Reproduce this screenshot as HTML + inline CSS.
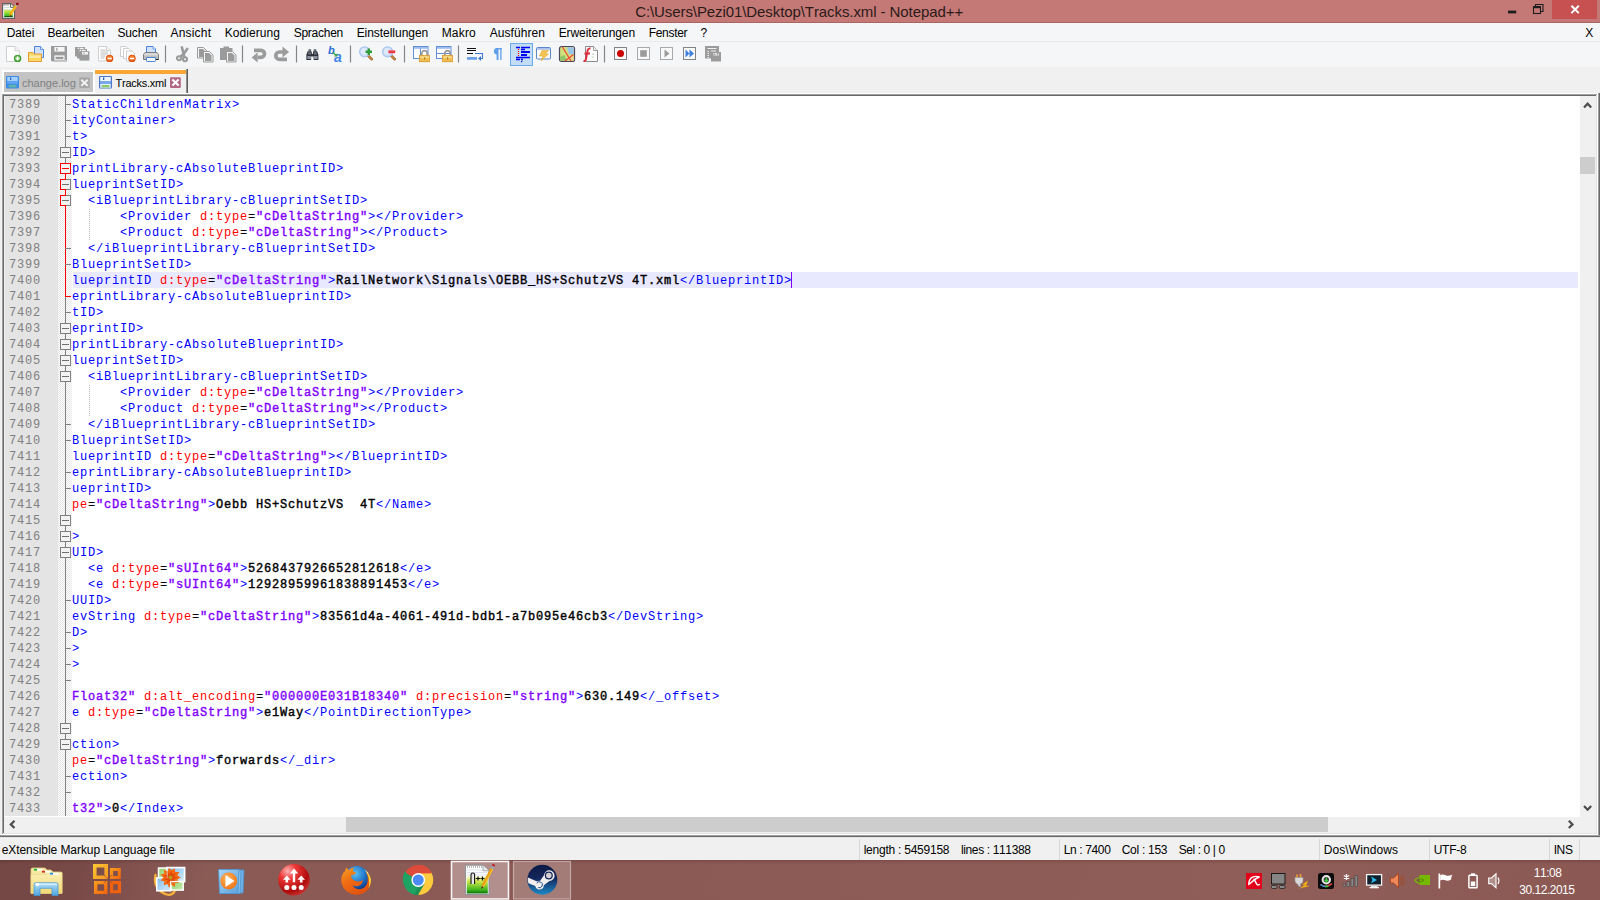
<!DOCTYPE html>
<html lang="de">
<head>
<meta charset="utf-8">
<title>C:\Users\Pezi01\Desktop\Tracks.xml - Notepad++</title>
<style>
*{box-sizing:border-box;margin:0;padding:0}
html,body{width:1600px;height:900px;overflow:hidden;background:#f0f0f0}
body{position:relative;font-kerning:none;font-family:"Liberation Sans",sans-serif;font-size:12px;color:#000}
i,b{font-style:normal;font-weight:normal;display:block;position:absolute}
.abs{position:absolute}
/* title bar */
#title{position:absolute;left:0;top:0;width:1600px;height:23px;background:#c47976;border-bottom:1px solid #ab6561}
#title .cap{position:absolute;left:0;top:0;width:1600px;height:22px}#title .cap span{position:absolute;white-space:pre;line-height:23px;height:22px;color:#2c1a19}
#closebtn{position:absolute;left:1552px;top:0;width:45px;height:19px;background:#c75050}
/* menu */
#menu{position:absolute;left:0;top:23px;width:1600px;height:19px;background:#f5f6f7;border-bottom:1px solid #e9eaeb}
#menu span{position:absolute;top:0;height:19px;line-height:20px;font-size:12px;white-space:nowrap;color:#000}
/* toolbar */
#tb{position:absolute;left:0;top:42px;width:1600px;height:25px;background:#f5f6f7}

#tb .sep{position:absolute;top:3px;width:1px;height:19px;background:#8d8d8d}
/* tabs */
#tabs{position:absolute;left:0;top:67px;width:1600px;height:26px;background:#f0f0f0}
.tab{position:absolute;white-space:nowrap;font-size:11px}
#tab1{left:3.500px;top:4.500px;width:89.500px;height:20.500px;background:#c3c3c3;color:#808080}
#tab2{left:95px;top:3px;width:91px;height:23px;background:#f0f0f0;border-top:4px solid #faa634;color:#000}
.tab span{position:absolute}
/* editor */
#ed{position:absolute;left:0;top:93px;width:1600px;height:744px}#ed i{position:absolute}
#edtop{position:absolute;left:0;top:93px;width:1600px;height:1px;background:#fff}
#gut{position:absolute;left:4px;top:96px;width:54px;height:720px;background:#e4e4e4;overflow:hidden}
#foldm{position:absolute;left:58px;top:96px;width:14px;height:720px;background:repeating-conic-gradient(#fff 0 25%,#e6e6e6 0 50%) 0 0/2px 2px;overflow:hidden}
#code{position:absolute;left:72px;top:96px;width:1508px;height:720px;background:#fff;overflow:hidden;
 font-family:"Liberation Mono",monospace;font-size:12px;letter-spacing:.7988px}
.no{position:absolute;left:5px;width:40px;height:16px;line-height:19px;font-family:"Liberation Mono",monospace;font-size:12px;letter-spacing:.7988px;color:#808080;white-space:pre}
.ln{position:absolute;left:0;width:1506px;height:16px;line-height:19px;white-space:pre}
.ln.cur{background:linear-gradient(90deg,transparent 0,transparent 1px,#e8e8ff 1px)}
.ln span{display:inline}
.t{color:#0000ff}.a{color:#ff0000}.s{color:#8000ff;-webkit-text-stroke:.4px #8000ff}.x{color:#000;-webkit-text-stroke:.4px #000}.e{color:#000}
.caret{display:inline-block;position:relative;width:1px;height:15px;background:#8000ff;vertical-align:top;margin-left:-1px;height:16px}
#foldline{position:absolute;left:65px;top:96px;width:1px;height:720px;background:#808080}
.tk{left:65px;width:6px;height:1px;background:#808080}
.tk.red{background:#ff0000;left:65px}
.bx{left:60px;width:11px;height:11px;border:1px solid #808080;background:#f3f3f3}
.bx b{left:1px;top:4px;width:7px;height:1px;background:#707070}
.bx.r{border-color:#ff0000}.bx.r b{background:#ff0000}
.bx.h::before{content:"";position:absolute;left:-1px;top:-1px;width:5px;height:9px;border:1px solid #ff0000;border-right:none}
.ig{position:absolute;left:17px;width:1px;height:32px;background:repeating-linear-gradient(180deg,#b4b4b4 0,#b4b4b4 1px,transparent 1px,transparent 2px)}
/* scrollbars */
#vs{position:absolute;left:1580px;top:96px;width:16px;height:721px;background:#f0f0f0}
#hs{position:absolute;left:4px;top:817px;width:1576px;height:16px;background:#f0f0f0}
#corner{position:absolute;left:1580px;top:817px;width:16px;height:16px;background:#f0f0f0}
.thumb{position:absolute;background:#cdcdcd}
/* status */
#status{position:absolute;left:0;top:837px;width:1600px;height:23px;background:#f0f0f0;font-size:12px;border-top:1px solid #e4e4e4}
#status span{position:absolute;top:0;height:23px;line-height:25px;white-space:pre}
#status i{top:1px;width:1px;height:21px;background:#d7d7d7}
/* taskbar */
#task{position:absolute;left:0;top:860px;width:1600px;height:40px;overflow:hidden;background:linear-gradient(180deg,rgba(60,25,25,.22) 0,rgba(60,25,25,0) 10%),linear-gradient(100deg,#744744 0,#784a47 5%,#835350 9%,#8a5a55 13%,#8b5a55 40%,#8e5c57 62%,#905e59 80%,#8b5853 100%)}
.clk span{position:absolute;color:#fff;white-space:pre;line-height:14px}
</style>
</head>
<body>
<div id="title">
  <div class="cap"><span style="left:635.15px;top:0px;font-size:15px;letter-spacing:-0.084px;">C:\Users\Pezi01\Desktop\Tracks.xml - Notepad++</span></div>
  <div id="closebtn"></div>
  <svg class="abs" style="left:0;top:0" width="1600" height="23" viewBox="0 0 1600 23">
    <g transform="translate(2,3)"><g id="nppicon">
      <path d="M0.600 0.600h8.200l3.700 3.600v11.200h-11.900z" fill="#fff" stroke="#5c6466" stroke-width="1.200"/>
      <path d="M8.600 0.800v3.600h3.700" fill="#fff" stroke="#5c6466" stroke-width="1"/>
      <path d="M2 1.200v1.500M4 1.200v1.500M6 1.200v1.500" stroke="#8a6a6a" stroke-width=".9"/>
      <path d="M2.200 4.600h5.500" stroke="#b9cbd6" stroke-width=".8"/>
      <defs><linearGradient id="ng" x1="0" y1="0" x2="0" y2="1"><stop offset="0" stop-color="#dfe94a"/><stop offset=".35" stop-color="#b4e23c"/><stop offset=".8" stop-color="#3fc12c"/><stop offset=".88" stop-color="#0a6a0a"/><stop offset="1" stop-color="#054c05"/></linearGradient></defs>
      <rect x="2.200" y="6.200" width="8.600" height="7.900" fill="url(#ng)"/>
      <rect x="2.200" y="6.200" width="8.600" height="1" fill="#d6e4f4"/>
      <path d="M14.300 1.800l-6.400 10.900" stroke="#f5a800" stroke-width="2.300"/>
      <path d="M14.800 2.100l-6.400 10.900" stroke="#ffcf3a" stroke-width=".8"/>
      <path d="M8.500 11.600l-1.100 2.300 2.300-1.300z" fill="#6b4a2a"/>
      <path d="M14.900 0.800l-1.200 2" stroke="#8aa4d0" stroke-width="2.200"/>
      <rect x="14.200" y="-.2" width="2.300" height="2.200" fill="#8a0000"/>
    </g></g>
    <rect x="1508" y="10.600" width="8.200" height="2.800" fill="#1e1e1e"/>
    <path d="M1535.500 6.500v-2h7.500v7h-2" fill="none" stroke="#1e1e1e" stroke-width="1.100"/>
    <rect x="1533.500" y="7" width="7" height="6.500" fill="none" stroke="#1e1e1e" stroke-width="1.100"/>
    <rect x="1533" y="6" width="8" height="2.200" fill="#1e1e1e"/>
    <path d="M1571.400 5.700l7.400 7.400M1578.800 5.700l-7.400 7.400" stroke="#fff" stroke-width="2" fill="none"/>
  </svg>
</div>
<div id="menu">
  <span style="left:6.66px;top:0px;font-size:12px;letter-spacing:-0.078px;">Datei</span>
  <span style="left:47.41px;top:0px;font-size:12px;letter-spacing:-0.114px;">Bearbeiten</span>
  <span style="left:117.41px;top:0px;font-size:12px;letter-spacing:-0.133px;">Suchen</span>
  <span style="left:170.41px;top:0px;font-size:12px;letter-spacing:0.217px;">Ansicht</span>
  <span style="left:224.66px;top:0px;font-size:12px;letter-spacing:0.080px;">Kodierung</span>
  <span style="left:293.66px;top:0px;font-size:12px;letter-spacing:-0.247px;">Sprachen</span>
  <span style="left:356.66px;top:0px;font-size:12px;letter-spacing:-0.043px;">Einstellungen</span>
  <span style="left:441.66px;top:0px;font-size:12px;letter-spacing:0.192px;">Makro</span>
  <span style="left:489.66px;top:0px;font-size:12px;letter-spacing:0.073px;">Ausführen</span>
  <span style="left:558.66px;top:0px;font-size:12px;letter-spacing:-0.074px;">Erweiterungen</span>
  <span style="left:648.66px;top:0px;font-size:12px;letter-spacing:-0.301px;">Fenster</span>
  <span style="left:700.41px;top:0px;font-size:12px;letter-spacing:-1.090px;">?</span>
  <span style="left:1585.16px;top:0px;font-size:12px;letter-spacing:0.840px;">X</span>
</div>
<div id="tb">
<svg width="760" height="25" viewBox="0 0 760 25" style="position:absolute;left:0;top:0"><rect x="164.9" y="3.500" width="1.200" height="17" fill="#858585"/><rect x="241.9" y="3.500" width="1.200" height="17" fill="#858585"/><rect x="295.9" y="3.500" width="1.200" height="17" fill="#858585"/><rect x="349.9" y="3.500" width="1.200" height="17" fill="#858585"/><rect x="403.9" y="3.500" width="1.200" height="17" fill="#858585"/><rect x="457.9" y="3.500" width="1.200" height="17" fill="#858585"/><rect x="603.9" y="3.500" width="1.200" height="17" fill="#858585"/><g transform="translate(6,4)"><path d="M0.5 0.5h8.5l4.5 4.5v10.5h-13z" fill="#fff" stroke="#cfcfcf"/><path d="M9 0.5v4.5h4.5" fill="#f1f1f1" stroke="#d4d4d4"/><circle cx="11.6" cy="12.4" r="3.7" fill="#3f9a32"/><circle cx="11.6" cy="12" r="2.6" fill="#62b84c"/><path d="M9.6 12.4h4M11.6 10.4v4" stroke="#fff" stroke-width="1.5"/></g>
<g transform="translate(28,4)"><path d="M6.5 0.5h6l3 3v8h-9z" fill="#cfe0fb" stroke="#4b83d8"/><path d="M12.5 0.5v3h3" fill="#e8f0fd" stroke="#4b83d8" stroke-width=".8"/><path d="M0.5 6.5h4.5l1.2 1.5h7.3v7.5h-13z" fill="#fbd768" stroke="#e79a33"/><path d="M1.5 9.5h11v5h-11z" fill="#fde9a1"/><path d="M1.5 12h11v2.5h-11z" fill="#fbd55c"/></g>
<g transform="translate(51,4)"><path d="M0 0h16v15.6h-15l-1-1z" fill="#9b9b9b"/><rect x="3.4" y="1" width="10.2" height="4.6" fill="#f6f6f6"/><rect x="5.2" y="1.8" width="1.2" height="3" fill="#9b9b9b"/><rect x="3.4" y="9.4" width="10.2" height="5" fill="#f6f6f6"/><rect x="4.6" y="10.8" width="7.8" height="2.4" fill="#9b9b9b"/><rect x="14.2" y="14" width="1" height="1" fill="#fff"/></g>
<g transform="translate(75,4)"><rect x="0" y="1" width="10" height="9.4" fill="#9b9b9b"/><rect x="2.6" y="1.8" width="6" height="2.6" fill="#f2f2f2"/><rect x="4" y="2.2" width="1" height="1.6" fill="#9b9b9b"/><rect x="2" y="3" width="10" height="9.4" fill="#9b9b9b"/><rect x="4.6" y="3.8" width="6" height="2.6" fill="#f2f2f2"/><rect x="6" y="4.2" width="1" height="1.6" fill="#9b9b9b"/><rect x="4.4" y="5.2" width="10" height="9.4" fill="#9b9b9b"/><rect x="7.0" y="6.0" width="6" height="2.6" fill="#f2f2f2"/><rect x="8.4" y="6.4" width="1" height="1.6" fill="#9b9b9b"/></g>
<g transform="translate(98,4)"><path d="M0.5 0.5h8l4 4v10.5h-12z" fill="#fff" stroke="#cfcfcf"/><path d="M8.5 0.5v4h4" fill="#f3f3f3" stroke="#d2d2d2"/><path d="M2.5 4h5M2.5 6h7.5M2.5 8h7.5M2.5 10h5M2.5 12h4" stroke="#b4b4b4" stroke-width=".9"/><circle cx="11.6" cy="12.4" r="3.7" fill="#d9520f"/><circle cx="11.6" cy="12.1" r="2.7" fill="#f07b2b"/><rect x="9.4" y="11.7" width="4.4" height="1.5" fill="#fff"/></g>
<g transform="translate(120,4)"><path d="M0.5 0.5h5.5l2.5 2.5v7.5h-8z" fill="#fff" stroke="#d0d0d0"/><path d="M3.5 2.5h5.5l2.5 2.5v7.5h-8z" fill="#fff" stroke="#d0d0d0"/><path d="M6.5 5h5.5l2.5 2.5v7.5h-8z" fill="#fff" stroke="#d0d0d0"/><circle cx="12" cy="12.4" r="3.7" fill="#d9520f"/><circle cx="12" cy="12.1" r="2.7" fill="#f07b2b"/><rect x="9.8" y="11.7" width="4.4" height="1.5" fill="#fff"/></g>
<g transform="translate(143,4)"><path d="M3.5 6.5v-6h6.5l2.5 2.5v3.5z" fill="#cfe1fb" stroke="#4b86dc"/><path d="M10 0.5v2.5h2.5" fill="#eef4fe" stroke="#4b86dc" stroke-width=".7"/><path d="M2 6.5h12l1.5 2v5h-15v-5z" fill="#d9d9d9" stroke="#7b7b7b"/><path d="M1 9.5h14v3.5h-14z" fill="#bdbdbd"/><path d="M12 13.5h3.500" stroke="#222" stroke-width="1"/><path d="M3.500 11.500h9v3.200q0 .8-.8.800h-7.400q-.8 0-.8-.8z" fill="#f4f8ff" stroke="#4b86dc"/></g>
<g transform="translate(176,4)"><path d="M5.600 0.300l2.600 9.500M11.800 2l-5.800 8.500" stroke="#9b9b9b" stroke-width="2.600" fill="none"/><circle cx="3" cy="12.200" r="2" fill="none" stroke="#9b9b9b" stroke-width="2.100"/><circle cx="9" cy="13.200" r="2" fill="none" stroke="#9b9b9b" stroke-width="2.100"/><path d="M4.300 10.600l2.700-2.300 1.800 3.200" stroke="#9b9b9b" stroke-width="2.200" fill="none"/></g>
<g transform="translate(197,4)"><path d="M0.5 1.5h6l3.500 3.500v7h-9.500z" fill="#f4f4f4" stroke="#9b9b9b"/><path d="M2.0 3.0h4l2.500 2.500v5.500h-6.500z" fill="#9b9b9b"/><path d="M6.5 5.5h6l3.500 3.500v7h-9.500z" fill="#f4f4f4" stroke="#9b9b9b"/><path d="M8.0 7.0h4l2.500 2.500v5.500h-6.500z" fill="#9b9b9b"/></g>
<g transform="translate(220,4)"><path d="M0 2h3.500v-1.500h5.500v1.500h3.500v12h-12.500z" fill="#9b9b9b"/><path d="M6.5 5.5h6l3.500 3.500v7h-9.500z" fill="#f4f4f4" stroke="#9b9b9b"/><path d="M8.0 7.0h4l2.500 2.500v5.500h-6.500z" fill="#9b9b9b"/></g>
<g transform="translate(251,4)"><path d="M3 4.300h7a3.500 3.500 0 0 1 0 7h-3.500" fill="none" stroke="#9b9b9b" stroke-width="3.700"/><path d="M0.600 11.400l6-5v10z" fill="#9b9b9b"/></g>
<g transform="translate(274,4)"><path d="M9.500 6h-4a3.700 3.700 0 0 0 0 7.400h7.500" fill="none" stroke="#9b9b9b" stroke-width="3.700"/><path d="M15 6l-6.500-5.500v11z" fill="#9b9b9b"/></g>
<g transform="translate(305.5,5.5)"><g transform="scale(.86)"><path d="M3.500 2h3v2.500h-3zM9.500 2h3v2.500h-3z" fill="#5a6270"/><path d="M2.500 4.500h4.500l.5 3h1l.5-3h4.500l1.500 4v6h-5.500v-4h-3v4h-5.500v-6z" fill="#2e3238"/><path d="M2 10h4.500v3.500h-4.500zM9.500 10h4.500v3.500h-4.500z" fill="#8a919c"/><path d="M3.500 5.500h2.500l.3 2.500h-3.600zM10 5.500h2.500l.8 2.500h-3.600z" fill="#6c7684"/></g></g>
<g transform="translate(328,4)"><text x="0" y="8.300" font-family="Liberation Sans,sans-serif" font-style="italic" font-weight="bold" font-size="11" fill="#2a6fd6">b</text><text x="6" y="15.800" font-family="Liberation Sans,sans-serif" font-style="italic" font-weight="bold" font-size="14" fill="#3f84e6">a</text><path d="M4.800 6.300l3 3" stroke="#3aa648" stroke-width="1.500"/><path d="M9.300 7.300v3.300h-3.300z" fill="#3aa648"/></g>
<g transform="translate(359,4)"><path d="M9 9.500l3.800 3.700" stroke="#a9692a" stroke-width="2.600" stroke-linecap="round"/><path d="M9.300 9.800l3.300 3.200" stroke="#d9a25c" stroke-width="1" stroke-linecap="round"/><circle cx="5.600" cy="5.800" r="5" fill="#cfe0f8" stroke="#a8c6f0" stroke-width="1.200"/><circle cx="5.200" cy="5.300" r="3.200" fill="#dfeafb"/><path d="M6.500 5.800h6.500M9.800 2.500v6.600" stroke="#2f9e3a" stroke-width="2.400"/></g>
<g transform="translate(382,4)"><path d="M9 9.500l3.800 3.700" stroke="#a9692a" stroke-width="2.600" stroke-linecap="round"/><path d="M9.300 9.800l3.300 3.200" stroke="#d9a25c" stroke-width="1" stroke-linecap="round"/><circle cx="5.600" cy="5.800" r="5" fill="#cfe0f8" stroke="#a8c6f0" stroke-width="1.200"/><circle cx="5.200" cy="5.300" r="3.200" fill="#dfeafb"/><rect x="6.400" y="4.400" width="6.800" height="2.800" fill="#ee2b3b"/><rect x="7" y="4.400" width="5.600" height="1" fill="#f7727c"/></g>
<g transform="translate(413,4)"><rect x="0.500" y="0.500" width="14.500" height="12" fill="#fff" stroke="#5f8fd8"/><rect x="1" y="1" width="13.500" height="1.800" fill="#9dbcec"/><path d="M7.500 2.500v10" stroke="#5f8fd8"/><path d="M8.800 9.500v-2.200a2.700 2.700 0 0 1 5.400 0v2.200" fill="none" stroke="#9a9a9a" stroke-width="1.700"/><rect x="6.500" y="9.300" width="10" height="6.400" fill="#f0bd4c" stroke="#d8982c" stroke-width=".8"/><rect x="7.300" y="10.200" width="8.400" height="2" fill="#f8dc8c"/><rect x="11" y="11.300" width="1.200" height="2.200" fill="#a87a24"/></g>
<g transform="translate(436,4)"><rect x="0.500" y="0.500" width="14.500" height="12" fill="#fff" stroke="#5f8fd8"/><rect x="1" y="1" width="13.500" height="1.800" fill="#9dbcec"/><path d="M0.500 7.500h14.500" stroke="#5f8fd8"/><path d="M8.800 9.500v-2.200a2.700 2.700 0 0 1 5.400 0v2.200" fill="none" stroke="#9a9a9a" stroke-width="1.700"/><rect x="6.500" y="9.300" width="10" height="6.400" fill="#f0bd4c" stroke="#d8982c" stroke-width=".8"/><rect x="7.300" y="10.200" width="8.400" height="2" fill="#f8dc8c"/><rect x="11" y="11.300" width="1.200" height="2.200" fill="#a87a24"/></g>
<g transform="translate(467,4)"><path d="M0 2.500h9M0 4.500h9M0 7.500h6" stroke="#111" stroke-width="1.100"/><rect x="0" y="11" width="10" height="2.800" fill="#6ea3ea"/><path d="M8 7.500h7.500v5h-3" fill="none" stroke="#3f78d0" stroke-width="1.100"/><path d="M11 12.500l3-2.500v5z" fill="#3f78d0"/></g>
<g transform="translate(492,4)"><path d="M5.200 2a3.300 3.300 0 0 0 0 6.600z" fill="#5f9fec"/><rect x="4.600" y="2" width="1.900" height="12" fill="#5f9fec"/><rect x="8" y="2" width="1.700" height="12" fill="#7db3f2"/><rect x="4.600" y="2" width="5.100" height="1.400" fill="#5f9fec"/></g>
<rect x="510.500" y="1.500" width="22" height="22" fill="#c3ddf7" stroke="#69a9ea"/><g transform="translate(515,4)"><path d="M1 1.500h4M6 1.500h9M6 3.500h4M6 6h9M6 9h6M1 11.500h14M1 13.500h4M6 13.500h2" stroke="#0000f0" stroke-width="1.300"/><path d="M6 5h9v2h-9zM6 8h6v2h-6z" fill="#0000f0"/><path d="M3.500 3v7" stroke="#ff0000" stroke-width="1.200" stroke-dasharray="1,1"/><rect x="6" y="15" width="1.200" height="1.200" fill="#0000f0"/></g>
<g transform="translate(536,4)"><rect x="0.500" y="1.500" width="14" height="11.500" rx="1" fill="#fdfdfd" stroke="#5b86cc"/><rect x="1" y="2" width="13" height="1.800" fill="#a9c3ec"/><path d="M6 4.500h6.500l-3 3.500h3l-7.500 7 2-5h-3.500z" fill="#f3c552" stroke="#e2a93a" stroke-width=".6"/></g>
<g transform="translate(559,4)"><rect x="0.500" y="0.500" width="15" height="15" rx="2" fill="#cfe07c" stroke="#4d4660" stroke-width="1.200"/><path d="M8 1.200h6.800v7h-5z" fill="#9cc6e8"/><path d="M1.200 10.500l4-1.500 3 5.800h-7z" fill="#8fc46a"/><path d="M9 9.500h5.800v5.300h-6z" fill="#e6d98a"/><path d="M3.500 1l8.500 14M14.500 8.500l-8.500 6.500" stroke="#ef4a3a" stroke-width="1.300"/></g>
<g transform="translate(582,4)"><path d="M3.500 0.500h8l4 4v11h-12z" fill="#fdfdfd" stroke="#8a8a8a"/><path d="M11.500 0.500v4h4" fill="#eee" stroke="#8a8a8a" stroke-width=".8"/><path d="M8.500 2.500q-2.500-.5-3 2.500l-1.500 8q-.5 2.500-2.500 1.800M2.500 7.500h5.500" fill="none" stroke="#de2b3a" stroke-width="1.900"/><path d="M11 7.500v5.500" stroke="#9cc49c" stroke-width="1" stroke-dasharray="1.500,1.500"/></g>
<g transform="translate(614,5)"><rect x="0.500" y="0.500" width="12" height="12" fill="#f9f9f9" stroke="#848484" stroke-width="1"/><circle cx="6.500" cy="6.500" r="3.500" fill="#cc0000"/></g>
<g transform="translate(637,5)"><rect x="0.500" y="0.500" width="12" height="12" fill="#f9f9f9" stroke="#a9a9a9" stroke-width="1"/><rect x="3.200" y="3.200" width="6.600" height="6.600" fill="#9b9b9b"/></g>
<g transform="translate(660,5)"><rect x="0.500" y="0.500" width="12" height="12" fill="#f9f9f9" stroke="#a9a9a9" stroke-width="1"/><path d="M4.500 2.500l5 4-5 4z" fill="#9b9b9b"/></g>
<g transform="translate(683,5)"><rect x="0.500" y="0.500" width="12" height="12" fill="#f9f9f9" stroke="#848484" stroke-width="1"/><path d="M2.500 2.500l4 4-4 4zM6.500 2.500l4.500 4-4.500 4z" fill="#3f7fe0"/></g>
<g transform="translate(705,4)"><rect x="0" y="0" width="14" height="12.500" fill="#9b9b9b"/><path d="M2.500 2.500h9M6 5h5" stroke="#efefef" stroke-width="1"/><path d="M2.500 5.500h1.500M2.500 7.500h1.500M2.500 9.500h1.500M2.500 11.500h1.500" stroke="#efefef" stroke-width="1"/><rect x="6" y="6" width="10" height="9.500" fill="#9b9b9b"/><rect x="8.500" y="7" width="5.500" height="2.600" fill="#f4f4f4"/><path d="M9.500 7.500v1.500h1.500M13.500 7.500h-1.500v1.500h1.500" stroke="#9b9b9b" stroke-width=".9" fill="none"/></g></svg>
</div>
<div id="tabs">
  <div class="abs" style="left:2px;top:3px;width:92px;height:23px;background:#fff"></div>
  <div class="tab" id="tab1"><span style="left:18.500px;top:5px">change.log</span></div>
  <div class="abs" style="left:94px;top:2px;width:92px;height:24px;background:#fff"></div>
  <div class="tab" id="tab2"><span style="left:20.500px;top:2.500px;letter-spacing:-.25px">Tracks.xml</span></div>
  <div class="abs" style="left:186px;top:2px;width:2px;height:24px;background:linear-gradient(90deg,#909090 0,#909090 50%,#5e5e5e 50%,#5e5e5e 100%)"></div>
  <svg class="abs" style="left:0;top:0" width="200" height="26" viewBox="0 0 200 26">
    <g transform="translate(6,9)">
      <rect x="0" y="0" width="13" height="12.600" rx="1" fill="#3b8be9"/>
      <rect x="1.200" y="1" width="10.600" height="4.200" fill="#a5d0fc"/>
      <rect x="4" y="1.400" width="1.300" height="2.600" fill="#2f6fd0"/>
      <rect x="1.200" y="5.200" width="10.600" height="2.600" fill="#5ea5f3"/>
      <rect x="2.600" y="8.800" width="7.800" height="2.600" fill="#62b5a6"/>
    </g>
    <g transform="translate(99,9)">
      <rect x="0" y="0" width="13" height="12.600" rx="1" fill="#4a78c4"/>
      <rect x="1.200" y="1" width="10.600" height="4.400" fill="#eef4fd"/>
      <rect x="4" y="1.400" width="1.300" height="2.600" fill="#2f5fb4"/>
      <rect x="1.200" y="5.400" width="10.600" height="2.600" fill="#78a8ea"/>
      <rect x="1.200" y="8" width="10.600" height="3.800" fill="#e4eefc"/>
      <rect x="2.600" y="9" width="7.800" height="2.400" fill="#8dc96a"/>
    </g>
    <g transform="translate(79,10.200)">
      <rect x=".3" y=".3" width="10.400" height="10.600" rx="1" fill="#a6a6a6"/>
      <path d="M2.300 2.500l6.400 6.200M8.700 2.500l-6.400 6.200" stroke="#f2f2f2" stroke-width="2"/>
    </g>
    <g transform="translate(170,10.300)">
      <rect x="0" y="0" width="10.800" height="10.600" rx="1" fill="#b26985"/>
      <path d="M2.400 2.300l6.200 6M8.600 2.300l-6.200 6" stroke="#fff" stroke-width="2.100"/>
    </g>
  </svg>
</div>
<div id="ed">
  <i style="left:2px;top:0;width:1596px;height:1px;background:#fff"></i>
  <i style="left:2px;top:1px;width:1596px;height:741px;background:#a0a0a0"></i>
  <i style="left:3px;top:2px;width:1594px;height:739px;background:#696969"></i>
  <i style="left:4px;top:3px;width:1592px;height:737px;background:#fff"></i>
  <i style="left:3px;top:740px;width:1594px;height:1px;background:#e3e3e3"></i>
  <i style="left:1596px;top:2px;width:1px;height:739px;background:#e3e3e3"></i>
  <i style="left:2px;top:741px;width:1596px;height:1px;background:#fff"></i>
  <i style="left:1597px;top:1px;width:1px;height:741px;background:#fff"></i>
  <i style="left:1598px;top:0;width:1px;height:744px;background:#a0a0a0"></i><i style="left:1599px;top:0;width:1px;height:744px;background:#696969"></i>
  <i style="left:0;top:742px;width:1600px;height:1px;background:#a0a0a0"></i>
  <i style="left:0;top:743px;width:1600px;height:1px;background:#696969"></i>
</div>
<div id="gut">
<div class="no" style="top:0px">7389</div>
<div class="no" style="top:16px">7390</div>
<div class="no" style="top:32px">7391</div>
<div class="no" style="top:48px">7392</div>
<div class="no" style="top:64px">7393</div>
<div class="no" style="top:80px">7394</div>
<div class="no" style="top:96px">7395</div>
<div class="no" style="top:112px">7396</div>
<div class="no" style="top:128px">7397</div>
<div class="no" style="top:144px">7398</div>
<div class="no" style="top:160px">7399</div>
<div class="no" style="top:176px">7400</div>
<div class="no" style="top:192px">7401</div>
<div class="no" style="top:208px">7402</div>
<div class="no" style="top:224px">7403</div>
<div class="no" style="top:240px">7404</div>
<div class="no" style="top:256px">7405</div>
<div class="no" style="top:272px">7406</div>
<div class="no" style="top:288px">7407</div>
<div class="no" style="top:304px">7408</div>
<div class="no" style="top:320px">7409</div>
<div class="no" style="top:336px">7410</div>
<div class="no" style="top:352px">7411</div>
<div class="no" style="top:368px">7412</div>
<div class="no" style="top:384px">7413</div>
<div class="no" style="top:400px">7414</div>
<div class="no" style="top:416px">7415</div>
<div class="no" style="top:432px">7416</div>
<div class="no" style="top:448px">7417</div>
<div class="no" style="top:464px">7418</div>
<div class="no" style="top:480px">7419</div>
<div class="no" style="top:496px">7420</div>
<div class="no" style="top:512px">7421</div>
<div class="no" style="top:528px">7422</div>
<div class="no" style="top:544px">7423</div>
<div class="no" style="top:560px">7424</div>
<div class="no" style="top:576px">7425</div>
<div class="no" style="top:592px">7426</div>
<div class="no" style="top:608px">7427</div>
<div class="no" style="top:624px">7428</div>
<div class="no" style="top:640px">7429</div>
<div class="no" style="top:656px">7430</div>
<div class="no" style="top:672px">7431</div>
<div class="no" style="top:688px">7432</div>
<div class="no" style="top:704px">7433</div>
</div>
<div id="foldm"></div>
<i style="left:4px;top:96px;width:1px;height:720px;background:#f0f0f0"></i>
<div id="code">
<i class="ig" style="top:113px"></i><i class="ig" style="top:289px"></i>
<div class="ln" style="top:0px"><span class="t">StaticChildrenMatrix&gt;</span></div>
<div class="ln" style="top:16px"><span class="t">ityContainer&gt;</span></div>
<div class="ln" style="top:32px"><span class="t">t&gt;</span></div>
<div class="ln" style="top:48px"><span class="t">ID&gt;</span></div>
<div class="ln" style="top:64px"><span class="t">printLibrary-cAbsoluteBlueprintID&gt;</span></div>
<div class="ln" style="top:80px"><span class="t">lueprintSetID&gt;</span></div>
<div class="ln" style="top:96px"><span class="x">  </span><span class="t">&lt;iBlueprintLibrary-cBlueprintSetID&gt;</span></div>
<div class="ln" style="top:112px"><span class="x">      </span><span class="t">&lt;Provider</span><span class="x"> </span><span class="a">d:type</span><span class="e">=</span><span class="s">"cDeltaString"</span><span class="t">&gt;</span><span class="t">&lt;/Provider&gt;</span></div>
<div class="ln" style="top:128px"><span class="x">      </span><span class="t">&lt;Product</span><span class="x"> </span><span class="a">d:type</span><span class="e">=</span><span class="s">"cDeltaString"</span><span class="t">&gt;</span><span class="t">&lt;/Product&gt;</span></div>
<div class="ln" style="top:144px"><span class="x">  </span><span class="t">&lt;/iBlueprintLibrary-cBlueprintSetID&gt;</span></div>
<div class="ln" style="top:160px"><span class="t">BlueprintSetID&gt;</span></div>
<div class="ln cur" style="top:176px"><span class="t">lueprintID</span><span class="x"> </span><span class="a">d:type</span><span class="e">=</span><span class="s">"cDeltaString"</span><span class="t">&gt;</span><span class="x">RailNetwork\Signals\OEBB_HS+SchutzVS 4T.xml</span><span class="t">&lt;/BlueprintID&gt;</span><i class="caret"></i></div>
<div class="ln" style="top:192px"><span class="t">eprintLibrary-cAbsoluteBlueprintID&gt;</span></div>
<div class="ln" style="top:208px"><span class="t">tID&gt;</span></div>
<div class="ln" style="top:224px"><span class="t">eprintID&gt;</span></div>
<div class="ln" style="top:240px"><span class="t">printLibrary-cAbsoluteBlueprintID&gt;</span></div>
<div class="ln" style="top:256px"><span class="t">lueprintSetID&gt;</span></div>
<div class="ln" style="top:272px"><span class="x">  </span><span class="t">&lt;iBlueprintLibrary-cBlueprintSetID&gt;</span></div>
<div class="ln" style="top:288px"><span class="x">      </span><span class="t">&lt;Provider</span><span class="x"> </span><span class="a">d:type</span><span class="e">=</span><span class="s">"cDeltaString"</span><span class="t">&gt;</span><span class="t">&lt;/Provider&gt;</span></div>
<div class="ln" style="top:304px"><span class="x">      </span><span class="t">&lt;Product</span><span class="x"> </span><span class="a">d:type</span><span class="e">=</span><span class="s">"cDeltaString"</span><span class="t">&gt;</span><span class="t">&lt;/Product&gt;</span></div>
<div class="ln" style="top:320px"><span class="x">  </span><span class="t">&lt;/iBlueprintLibrary-cBlueprintSetID&gt;</span></div>
<div class="ln" style="top:336px"><span class="t">BlueprintSetID&gt;</span></div>
<div class="ln" style="top:352px"><span class="t">lueprintID</span><span class="x"> </span><span class="a">d:type</span><span class="e">=</span><span class="s">"cDeltaString"</span><span class="t">&gt;</span><span class="t">&lt;/BlueprintID&gt;</span></div>
<div class="ln" style="top:368px"><span class="t">eprintLibrary-cAbsoluteBlueprintID&gt;</span></div>
<div class="ln" style="top:384px"><span class="t">ueprintID&gt;</span></div>
<div class="ln" style="top:400px"><span class="a">pe</span><span class="e">=</span><span class="s">"cDeltaString"</span><span class="t">&gt;</span><span class="x">Oebb HS+SchutzVS  4T</span><span class="t">&lt;/Name&gt;</span></div>
<div class="ln" style="top:416px"></div>
<div class="ln" style="top:432px"><span class="t">&gt;</span></div>
<div class="ln" style="top:448px"><span class="t">UID&gt;</span></div>
<div class="ln" style="top:464px"><span class="x">  </span><span class="t">&lt;e</span><span class="x"> </span><span class="a">d:type</span><span class="e">=</span><span class="s">"sUInt64"</span><span class="t">&gt;</span><span class="x">5268437926652812618</span><span class="t">&lt;/e&gt;</span></div>
<div class="ln" style="top:480px"><span class="x">  </span><span class="t">&lt;e</span><span class="x"> </span><span class="a">d:type</span><span class="e">=</span><span class="s">"sUInt64"</span><span class="t">&gt;</span><span class="x">12928959961838891453</span><span class="t">&lt;/e&gt;</span></div>
<div class="ln" style="top:496px"><span class="t">UUID&gt;</span></div>
<div class="ln" style="top:512px"><span class="t">evString</span><span class="x"> </span><span class="a">d:type</span><span class="e">=</span><span class="s">"cDeltaString"</span><span class="t">&gt;</span><span class="x">83561d4a-4061-491d-bdb1-a7b095e46cb3</span><span class="t">&lt;/DevString&gt;</span></div>
<div class="ln" style="top:528px"><span class="t">D&gt;</span></div>
<div class="ln" style="top:544px"><span class="t">&gt;</span></div>
<div class="ln" style="top:560px"><span class="t">&gt;</span></div>
<div class="ln" style="top:576px"></div>
<div class="ln" style="top:592px"><span class="s">Float32"</span><span class="x"> </span><span class="a">d:alt_encoding</span><span class="e">=</span><span class="s">"000000E031B18340"</span><span class="x"> </span><span class="a">d:precision</span><span class="e">=</span><span class="s">"string"</span><span class="t">&gt;</span><span class="x">630.149</span><span class="t">&lt;/_offset&gt;</span></div>
<div class="ln" style="top:608px"><span class="t">e</span><span class="x"> </span><span class="a">d:type</span><span class="e">=</span><span class="s">"cDeltaString"</span><span class="t">&gt;</span><span class="x">e1Way</span><span class="t">&lt;/PointDirectionType&gt;</span></div>
<div class="ln" style="top:624px"></div>
<div class="ln" style="top:640px"><span class="t">ction&gt;</span></div>
<div class="ln" style="top:656px"><span class="a">pe</span><span class="e">=</span><span class="s">"cDeltaString"</span><span class="t">&gt;</span><span class="x">forwards</span><span class="t">&lt;/_dir&gt;</span></div>
<div class="ln" style="top:672px"><span class="t">ection&gt;</span></div>
<div class="ln" style="top:688px"></div>
<div class="ln" style="top:704px"><span class="s">t32"</span><span class="t">&gt;</span><span class="x">0</span><span class="t">&lt;/Index&gt;</span></div>
</div>
<div id="folds" class="abs" style="left:0;top:96px;width:80px;height:720px;overflow:hidden">
<i style="left:65px;top:0;width:1px;height:720px;background:#808080"></i>
<i style="left:65px;top:78px;width:1px;height:123px;background:#ff0000"></i>
<i class="tk" style="top:8px"></i>
<i class="tk" style="top:24px"></i>
<i class="tk" style="top:40px"></i>
<i class="bx b" style="top:51px"><b></b></i>
<i class="bx r" style="top:67px"><b></b></i>
<i class="bx h" style="top:83px"><b></b></i>
<i class="bx h" style="top:99px"><b></b></i>
<i class="tk" style="top:152px"></i>
<i class="tk" style="top:168px"></i>
<i class="tk red" style="top:200px"></i>
<i class="tk" style="top:216px"></i>
<i class="bx b" style="top:227px"><b></b></i>
<i class="bx b" style="top:243px"><b></b></i>
<i class="bx b" style="top:259px"><b></b></i>
<i class="bx b" style="top:275px"><b></b></i>
<i class="tk" style="top:328px"></i>
<i class="tk" style="top:344px"></i>
<i class="tk" style="top:376px"></i>
<i class="tk" style="top:392px"></i>
<i class="bx b" style="top:419px"><b></b></i>
<i class="bx b" style="top:435px"><b></b></i>
<i class="bx b" style="top:451px"><b></b></i>
<i class="tk" style="top:504px"></i>
<i class="tk" style="top:536px"></i>
<i class="tk" style="top:552px"></i>
<i class="tk" style="top:568px"></i>
<i class="tk" style="top:584px"></i>
<i class="bx b" style="top:627px"><b></b></i>
<i class="bx b" style="top:643px"><b></b></i>
<i class="tk" style="top:680px"></i>
<i class="tk" style="top:696px"></i>
</div>
<div id="vs"><div class="thumb" style="left:0;top:61px;width:15px;height:17px"></div></div>
<div id="hs"><div class="thumb" style="left:342px;top:0;width:982px;height:15px"></div></div>
<div id="corner"></div>
<svg class="abs" style="left:0;top:0" width="1600" height="900" viewBox="0 0 1600 900">
  <g fill="none" stroke="#4d4d4d" stroke-width="2.200">
    <path d="M1584 107.400l3.600-3.700 3.600 3.700"/>
    <path d="M1584 806l3.600 3.700 3.600-3.700"/>
    <path d="M14.500 820.800l-3.700 3.600 3.700 3.600"/>
    <path d="M1568.800 820.800l3.700 3.600-3.700 3.600"/>
  </g>
</svg>
<div id="status">
  <span style="left:1.66px;top:0px;font-size:12px;letter-spacing:-0.057px;">eXtensible Markup Language file</span>
  <span style="left:863.66px;top:0px;font-size:12px;letter-spacing:-0.236px;">length : 5459158</span>
  <span style="left:960.91px;top:0px;font-size:12px;letter-spacing:-0.360px;">lines : 111388</span>
  <span style="left:1063.66px;top:0px;font-size:12px;letter-spacing:-0.358px;">Ln : 7400</span>
  <span style="left:1121.66px;top:0px;font-size:12px;letter-spacing:-0.270px;">Col : 153</span>
  <span style="left:1178.66px;top:0px;font-size:12px;letter-spacing:-0.405px;">Sel : 0 | 0</span>
  <span style="left:1323.66px;top:0px;font-size:12px;letter-spacing:0.096px;">Dos\Windows</span>
  <span style="left:1433.66px;top:0px;font-size:12px;letter-spacing:-0.228px;">UTF-8</span>
  <span style="left:1553.66px;top:0px;font-size:12px;letter-spacing:-0.387px;">INS</span>
  <i style="left:859px"></i><i style="left:1059px"></i><i style="left:1319px"></i><i style="left:1429px"></i><i style="left:1549px"></i><i style="left:1579px"></i>
</div>
<div id="task">
<svg class="abs" style="left:0;top:0" width="1200" height="40" viewBox="0 0 1200 40"><defs>
<linearGradient id="fold" x1="0" y1="0" x2="0" y2="1"><stop offset="0" stop-color="#fbf0b6"/><stop offset="1" stop-color="#f1d873"/></linearGradient>
<linearGradient id="stand" x1="0" y1="0" x2="0" y2="1"><stop offset="0" stop-color="#b6e0f7"/><stop offset="1" stop-color="#4ea4e0"/></linearGradient>
<linearGradient id="off1" x1="0" y1="0" x2="1" y2="1"><stop offset="0" stop-color="#fcc934"/><stop offset="1" stop-color="#f7931e"/></linearGradient>
<linearGradient id="off2" x1="0" y1="0" x2="1" y2="1"><stop offset="0" stop-color="#f9a01f"/><stop offset="1" stop-color="#f2600c"/></linearGradient>
<radialGradient id="redb" cx=".3" cy=".22" r=".9"><stop offset="0" stop-color="#ffb4b4"/><stop offset=".3" stop-color="#ec3838"/><stop offset=".72" stop-color="#ae0c0c"/><stop offset=".92" stop-color="#c83030"/><stop offset="1" stop-color="#e06a6a"/></radialGradient>
<linearGradient id="sky" x1="0" y1="0" x2="1" y2="1"><stop offset="0" stop-color="#7fbdf0"/><stop offset="1" stop-color="#d6ecfb"/></linearGradient>
<linearGradient id="grn" x1="0" y1="0" x2="1" y2="1"><stop offset="0" stop-color="#8dd06a"/><stop offset="1" stop-color="#c9ebb0"/></linearGradient>
<radialGradient id="flw" cx=".5" cy=".5" r=".5"><stop offset="0" stop-color="#c9a01a"/><stop offset=".22" stop-color="#e85a10"/><stop offset="1" stop-color="#f4730f"/></radialGradient>
<linearGradient id="wmp" x1="0" y1="0" x2="1" y2="1"><stop offset="0" stop-color="#a9d4f4"/><stop offset="1" stop-color="#5aa2dc"/></linearGradient>
<radialGradient id="wmpo" cx=".4" cy=".35" r=".7"><stop offset="0" stop-color="#fdb25c"/><stop offset="1" stop-color="#ee7412"/></radialGradient>
<radialGradient id="ffb" cx=".45" cy=".3" r=".7"><stop offset="0" stop-color="#5ec1f2"/><stop offset=".6" stop-color="#1c6fc4"/><stop offset="1" stop-color="#12307a"/></radialGradient>
<linearGradient id="fox" x1="0" y1="0" x2=".6" y2="1"><stop offset="0" stop-color="#f5a021"/><stop offset=".5" stop-color="#ee6a14"/><stop offset="1" stop-color="#e2520f"/></linearGradient>
<linearGradient id="steam" x1="0" y1="0" x2="0" y2="1"><stop offset="0" stop-color="#0b1a44"/><stop offset=".45" stop-color="#14275c"/><stop offset="1" stop-color="#1b8ac8"/></linearGradient>
<linearGradient id="npg" x1="0" y1="0" x2="0" y2="1"><stop offset="0" stop-color="#fafde8"/><stop offset=".3" stop-color="#cfe84a"/><stop offset=".8" stop-color="#3fb51e"/><stop offset="1" stop-color="#0a6d0a"/></linearGradient>
</defs>
<rect x="451.500" y="1.500" width="57" height="37.500" fill="#c9b0ae" fill-opacity=".62" stroke="#fff" stroke-opacity=".92" stroke-width="1.600"/>
<rect x="513.500" y="1.500" width="57" height="37.500" fill="#c5aaa8" fill-opacity=".42" stroke="#e8d8d6" stroke-opacity=".55" stroke-width="1.200"/>
<g transform="translate(30,6)"><path d="M1 3.500q0-1.500 1.500-1.500h12.500l2 2h4l2 2h7.500q1.500 0 1.500 1.500v19.500h-31z" fill="#f5e7a0" stroke="#e3cd78" stroke-width=".8"/><path d="M1 8.500h16l2-2h13v21h-31z" fill="url(#fold)" stroke="#e9d689" stroke-width=".6"/><rect x="4" y="2.800" width="3" height="1.800" fill="#14b53c"/><rect x="7" y="2.800" width="5.500" height="1.800" fill="#fff"/><rect x="12" y="4.800" width="3" height="1.800" fill="#d9301e"/><rect x="15" y="4.800" width="5.500" height="1.800" fill="#fff"/><rect x="20" y="6.800" width="3" height="1.800" fill="#1f8fe8"/><rect x="23" y="6.800" width="5.500" height="1.800" fill="#fff"/><path d="M4 18.500q0-1.800 1.800-1.800h20.400q1.800 0 1.800 1.800v11h-6v-7.200h-12v7.200h-6z" fill="url(#stand)" stroke="#3f97d8" stroke-width=".7"/><path d="M5 18.200h22" stroke="#dff2fc" stroke-width="1.200"/><circle cx="7.500" cy="18.500" r="1.800" fill="#fff" fill-opacity=".9"/></g>
<g transform="translate(93,4)"><path d="M0 0h15v15h-15zM3.600 3.600v7.800h7.800v-7.800z" fill="url(#off1)" fill-rule="evenodd"/><path d="M17 4h10.800v11h-10.800zM20.200 7v5h4.600v-5z" fill="url(#off2)" fill-rule="evenodd"/><path d="M1 17h13.500v13h-13.500zM4.400 20.200v6.600h6.700v-6.600z" fill="url(#off2)" fill-rule="evenodd"/><path d="M17 17h11v12.200h-11zM20.200 20.200v6h4.600v-6z" fill="#f2620e" fill-rule="evenodd"/><path d="M11 11l8 8M19 11l-8 8" stroke="#8a4a3a" stroke-width="1" stroke-opacity=".6"/></g>
<g transform="translate(154,6)"><defs><clipPath id="pgc"><rect x="5.200" y="2.800" width="7.600" height="9.700"/><rect x="17.500" y="16.200" width="11" height="7.200"/><rect x="3.500" y="12.500" width="12.600" height="11.600"/><rect x="13.600" y="2.400" width="16.200" height="12.400"/></clipPath></defs><path d="M1.500 9q-2.500 11 6 17t13-.5" fill="none" stroke="#f7b23a" stroke-width="2.400" stroke-linecap="round"/><path d="M2 12q-1.500 9 6 13.500" fill="none" stroke="#fcd98a" stroke-width="1" stroke-linecap="round"/><rect x="4.500" y="2" width="9" height="11" fill="url(#grn)" stroke="#fff" stroke-width="1.500"/><rect x="16.800" y="15.500" width="12.400" height="8.600" fill="url(#grn)" stroke="#fff" stroke-width="1.500"/><rect x="2.800" y="11.800" width="14" height="13" fill="url(#sky)" stroke="#fff" stroke-width="1.500"/><rect x="12.800" y="1.600" width="17.800" height="14" fill="url(#sky)" stroke="#fff" stroke-width="1.700"/><g clip-path="url(#pgc)"><path d="M26.90 11.50L23.41 13.53L25.25 17.12L21.21 16.94L20.82 20.96L17.52 18.63L15.02 21.79L13.51 18.05L9.69 19.36L10.44 15.39L6.52 14.43L9.30 11.50L6.52 8.57L10.44 7.61L9.69 3.64L13.51 4.95L15.02 1.21L17.52 4.37L20.82 2.04L21.21 6.06L25.25 5.88L23.41 9.47z" fill="#f26a12"/><path d="M24.00 11.50L19.79 12.70L22.25 16.32L18.25 14.53L17.80 18.89L15.89 14.95L12.75 18.00L13.82 13.75L9.45 14.07L13.00 11.50L9.45 8.93L13.82 9.25L12.75 5.00L15.89 8.05L17.80 4.11L18.25 8.47L22.25 6.68L19.79 10.30z" fill="#e2480c"/><circle cx="16.500" cy="11.500" r="2" fill="#b99a1c"/></g></g>
<g transform="translate(218,9)"><path d="M3 1h23l-1 23h-21z" fill="#6fb1e4" stroke="#4b94d0" stroke-width=".8"/><path d="M1.500 1h21.500l-1 23.500h-19.500z" fill="#8cc3ee" stroke="#4b94d0" stroke-width=".8"/><path d="M0.500 0.500h20.500l-1 24h-18.500z" fill="url(#wmp)" stroke="#4b94d0" stroke-width=".8"/><circle cx="10.800" cy="12" r="8.400" fill="url(#wmpo)"/><path d="M7.500 6l9 6-9 6z" fill="#fff"/></g>
<g transform="translate(278,4)"><circle cx="16" cy="15.800" r="15.800" fill="url(#redb)"/><path d="M16 4.500l-4.200 5h3v8.700h2.400v-8.700h3z" fill="#fff"/><path d="M8.800 11.500l-3.800 4.200h2.500v2.800h2.600v-2.800h2.500zM23.200 11.500l-3.800 4.200h2.500v2.800h2.600v-2.800h2.500z" fill="#fff"/><circle cx="8.800" cy="23.500" r="2.500" fill="#fff"/><circle cx="16" cy="23.500" r="2.500" fill="#fff"/><circle cx="23.200" cy="23.500" r="2.500" fill="#fff"/></g>
<g transform="translate(341,4.5)"><circle cx="15.500" cy="14" r="12.600" fill="url(#ffb)"/><path d="M4 6.500L5.200 3L7.800 5.600Q10 3.200 13.200 3Q11.600 4.800 12 6.800L15 8.200L13.600 10L10.600 10.600L10.200 12.800Q12 16.800 16.500 17Q20 17 22 15.500Q21.500 19.500 18 21.200Q14.500 22.500 11.500 20.800Q14.500 25.500 20 24.600Q25.500 23 26.600 17Q27.400 12 25 7.200Q29.400 10.500 29.900 15.500Q30 22 25.600 26.600Q21 30.600 14.500 30.200Q7 29.400 2.600 23.600Q-1 17.500 .800 11.400Q2 8 4 6.500Z" fill="url(#fox)"/><path d="M25 7.200Q29.400 10.500 29.900 15.500Q30 20 27.600 24Q28.800 18 27.800 13.500Q27 9.800 25 7.200Z" fill="#fbd83a"/><path d="M22.500 4.500Q26.500 6.500 28.300 10.500Q25.500 7.500 22.500 4.500Z" fill="#fdf0a0"/></g>
<g transform="translate(403.25,5)"><path d="M15.00 15.00L2.01 7.50A15 15 0 0 1 27.99 7.50z" fill="#de4b3a"/><path d="M15.00 15.00L27.99 7.50A15 15 0 0 1 15.00 30.00z" fill="#fdca3d"/><path d="M15.00 15.00L15.00 30.00A15 15 0 0 1 2.01 7.50z" fill="#1ea362"/><path d="M15 15L2 7.500l6.500-5.500 8 .5z" fill="#de4b3a"/><path d="M15 8.200h13.200q2 4.500 1.500 8.500l-8 1z" fill="#fdca3d"/><path d="M15 8.200h13.400q-2-4.800-6-6.700t-9-1.200-7.800 5.200l6 8.500z" fill="#de4b3a"/><path d="M2.300 6.800l7 12 5.700 3-4 7.600q-6-1.500-9-7t-2.200-10.500 2.500-5.100z" fill="#1ea362"/><path d="M21.500 18.500l-6.800 11.500q-2 0-3.800-.6l4.200-7.400z" fill="#1b8f55"/><circle cx="15" cy="15" r="6.900" fill="#fff"/><circle cx="15" cy="15" r="5.500" fill="#4c8bf5"/></g>
<g transform="translate(465,4)"><path d="M0.600 1.200h17.400l6 5.600v23.700h-23.400z" fill="#fff" stroke="#8b9396" stroke-width="1"/><path d="M18 1.200v5.600h6" fill="#e8ecee" stroke="#8b9396" stroke-width=".8"/><path d="M2 3h15" stroke="#777" stroke-width="1" stroke-dasharray="1,1"/><path d="M2 6h16M2 8.500h20M2 11h20" stroke="#c5d6e2" stroke-width=".7"/><rect x="1.800" y="12" width="21" height="17.500" fill="url(#npg)"/><path d="M6 20v-9.200a1.800 1.800 0 0 1 3.600 0v9.200" fill="#e6e6e6" stroke="#111" stroke-width="1.100"/><path d="M10.800 14.500h4.200M13 12.400v4.200M15.400 14.500h4.200M17.500 12.400v4.200" stroke="#111" stroke-width="1.200"/><path d="M27 4.500l-9.500 18" stroke="#e9a010" stroke-width="3"/><path d="M27.800 5l-9.500 18" stroke="#f7c540" stroke-width="1"/><path d="M16.800 22l-.8 3 2.800-1.700z" fill="#5a3d1e"/><path d="M28.200 2l-1.300 2.600" stroke="#9aa6b8" stroke-width="3"/><path d="M29 0.300l-.9 1.800" stroke="#c0202a" stroke-width="3"/></g>
<g transform="translate(527.3,4.75)"><circle cx="15" cy="15" r="15" fill="url(#steam)"/><path d="M0.600 12.800l9.200 3.900q1.400-.8 2.900-.5l4-5.800a5.300 5.300 0 1 1 5.500 5.800l-5.700 4.200a4.300 4.300 0 0 1-8.500.9l-6.900-2.900q-1-2.800-.5-5.600z" fill="#f3eeee"/><circle cx="21.500" cy="10.800" r="3.400" fill="#d9cfd0" stroke="#14275c" stroke-width="1.300"/><path d="M9.500 18.500a3 3 0 1 1 1.500 4.300" fill="none" stroke="#1d4a86" stroke-width="1"/></g></svg>
<svg class="abs" style="left:1230px;top:0" width="290" height="40" viewBox="0 0 290 40"><g transform="translate(16,13)"><rect width="16" height="16" fill="#e2001a"/><path d="M2.800 11.600q-.2-5.300 3.600-7.400 3.300-1.600 6.800-.2-2.600 1.200-4.800 2.900t-5.600 4.700z" fill="none" stroke="#fff" stroke-width="1.400" stroke-linejoin="round"/><path d="M8 6.200l2.900 5.200q.9 1.300 2.500.1" fill="none" stroke="#fff" stroke-width="1.500" stroke-linecap="round"/></g>
<g transform="translate(41,13)"><rect x="0.500" y="0.500" width="13.500" height="10.500" fill="#858585" stroke="#1a1a1a" stroke-width="1"/><rect x="0.500" y="12.500" width="5.500" height="3" rx="1" fill="#8a8a8a" stroke="#222" stroke-width=".8"/><rect x="8.500" y="12.500" width="5.500" height="3" rx="1" fill="#8a8a8a" stroke="#222" stroke-width=".8"/></g>
<g transform="translate(64,13)"><path d="M3 1.500v3M6.500 1v3" stroke="#f0a030" stroke-width="1.600"/><path d="M1 4.500h8v3q0 3-3 3.500l1 2.500h-2l-1.500-2.500q-2.500-.8-2.500-3.500z" fill="#d8d8d8" stroke="#9a9a9a" stroke-width=".6"/><path d="M13.500 8l-5 3.500h3l-5 3.500 8.500-2h-3z" fill="#f9c21a" stroke="#e89a10" stroke-width=".5"/></g>
<g transform="translate(88,13)"><rect width="16" height="16" rx="2.500" fill="#0c0c0c"/><circle cx="8.300" cy="6.800" r="4.700" fill="#e9e9e9"/><circle cx="8.300" cy="6.800" r="2.700" fill="#3c3c3c"/><path d="M8.300 4.500v3.500M6.600 6.800l1.700 2 1.700-2" stroke="#3fd13a" stroke-width="1.200" fill="none"/><path d="M2.500 11.500q5.500 4 11.500-.8" fill="none" stroke="#e8413a" stroke-width="1.500"/><path d="M2.500 11.500q3 2.300 6 2" fill="none" stroke="#2a8fe0" stroke-width="1.500"/><path d="M7 13.600q2 .1 3.500-.6" fill="none" stroke="#3fc13a" stroke-width="1.500"/></g>
<g transform="translate(112,13)"><path d="M4.500 1v6M1.800 2.500l5.400 3M7.200 2.500l-5.400 3" stroke="#f4f4f4" stroke-width="1.300"/><rect x="1" y="11" width="2.600" height="2.600" fill="#8a8a8a" stroke="#3a3a3a" stroke-width=".5"/><rect x="5" y="8.500" width="2.600" height="5.100" fill="#8a8a8a" stroke="#3a3a3a" stroke-width=".5"/><rect x="9" y="5.500" width="2.600" height="8.100" fill="#8a8a8a" stroke="#3a3a3a" stroke-width=".5"/><rect x="13" y="2.500" width="2.600" height="11.100" fill="#8a8a8a" stroke="#3a3a3a" stroke-width=".5"/></g>
<g transform="translate(136,14)"><rect x="0.600" y="0.600" width="15" height="10.500" fill="#10202c" stroke="#f2f2f2" stroke-width="1.300"/><path d="M5 2.500l6 3.400-6 3.400 1.500-3.400z" fill="#2bc0f0"/><rect x="5" y="12" width="6.500" height="1.200" fill="#e8e8e8"/><rect x="3.500" y="13" width="9.500" height="1.300" fill="#f4f4f4"/></g>
<g transform="translate(160,13)"><path d="M0.500 5h3l5-4.500v14l-5-4.500h-3z" fill="#f0895a" stroke="#a8431c" stroke-width=".9"/><path d="M10.500 3.500q2 4 0 8M12.500 2q3 5.500 0 11" fill="none" stroke="#a8431c" stroke-width="1" stroke-opacity=".85"/></g>
<g transform="translate(184,15)"><path d="M5.500 0h10.500v10h-10.500z" fill="#76b900"/><path d="M6 2q-4 .3-6 3.200 2 3.400 6 3.600v-1q-3-.3-4.500-2.700 1.500-2 4.500-2.200z" fill="#76b900"/><path d="M6 3.200q2.800 0 4.200 2-1.500 2-4.200 2.100-1.800-.2-2.500-2 1-1.300 2.500-1.400v1q-.8.100-1.200.6.500.8 1.200.8 1.400 0 2.400-1.200-.9-1.200-2.400-1.200z" fill="#4c7a00" fill-opacity=".75"/></g>
<g transform="translate(208,13)"><rect x="0.500" y="0.500" width="1.700" height="15" fill="#fff"/><path d="M2.200 2q3-1.200 5.500.2t6.800-.5q-1.500 2-1.400 4.800-3.200 2-5.800.8t-5.100.2z" fill="#fff"/></g>
<g transform="translate(238,13)"><rect x="3" y="0.300" width="4" height="1.700" fill="#fff"/><rect x="0.900" y="2.200" width="8.200" height="12.600" rx=".8" fill="none" stroke="#fff" stroke-width="1.500"/><rect x="2.800" y="8.500" width="4.400" height="4.600" fill="#fff"/></g>
<g transform="translate(258,13)"><path d="M0.700 5h2.800l4.500-4.200v14l-4.500-4.200h-2.800z" fill="#f4f4f4" fill-opacity=".35" stroke="#fff" stroke-width="1.100"/><path d="M10 4.500q1.800 3.200 0 6.500" fill="none" stroke="#fff" stroke-width="1.200"/></g></svg>
<div class="clk"><span style="left:1533.86px;top:5.5px;font-size:12px;letter-spacing:-0.473px;">11:08</span><span style="left:1519.36px;top:22.5px;font-size:12px;letter-spacing:-0.498px;">30.12.2015</span></div>
</div>
</body>
</html>
